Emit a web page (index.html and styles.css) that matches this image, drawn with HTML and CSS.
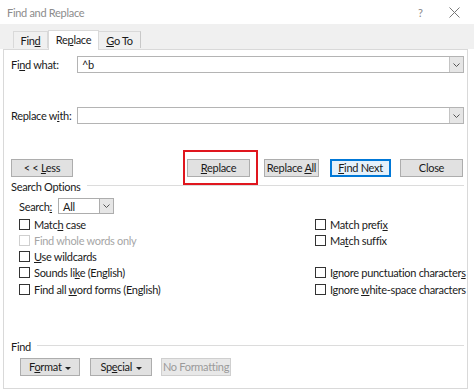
FILE: index.html
```html
<!DOCTYPE html>
<html>
<head>
<meta charset="utf-8">
<link rel="stylesheet" href="styles.css">
</head>
<body>
<div class="window">
  <div class="titlebar">
    <span class="title">Find and Replace</span>
    <span class="help">?</span>
    <span class="close-x">
      <svg width="11" height="11" viewBox="0 0 11 11"><path d="M0.5 0.5 L10.5 10.5 M10.5 0.5 L0.5 10.5" stroke="#777" stroke-width="1" fill="none"/></svg>
    </span>
  </div>
  <div class="tabstrip">
    <div class="tab tab-find">Fin<u>d</u></div>
    <div class="tab active">Re<u>p</u>lace</div>
    <div class="tab tab-goto"><u>G</u>o To</div>
  </div>
  <div class="panel">
    <div class="field-row first">
      <label class="field-label">Fi<u>n</u>d what:</label>
      <div class="combo">
        <span class="combo-text">^b</span>
        <span class="combo-btn"><svg width="7" height="4" viewBox="0 0 7 4"><path d="M0.5 0.5 L3.5 3.5 L6.5 0.5" stroke="#555" fill="none"/></svg></span>
      </div>
    </div>
    <div class="field-row second">
      <label class="field-label">Replace w<u>i</u>th:</label>
      <div class="combo">
        <span class="combo-text"></span>
        <span class="combo-btn"><svg width="7" height="4" viewBox="0 0 7 4"><path d="M0.5 0.5 L3.5 3.5 L6.5 0.5" stroke="#555" fill="none"/></svg></span>
      </div>
    </div>
    <div class="button-row">
      <button class="btn btn-less">&lt; &lt; <u>L</u>ess</button>
      <div class="highlight-wrap">
        <button class="btn btn-replace"><u>R</u>eplace</button>
        <span class="highlight"></span>
      </div>
      <button class="btn btn-all">Replace <u>A</u>ll</button>
      <button class="btn btn-next"><u>F</u>ind Next</button>
      <button class="btn btn-close">Close</button>
    </div>
    <div class="group-head opts-head"><span>Search Options</span><span class="rule"></span></div>
    <div class="search-row">
      <span class="search-label">Search<u>:</u></span>
      <div class="select">
        <span class="select-text">All</span>
        <span class="select-btn"><svg width="7" height="4" viewBox="0 0 7 4"><path d="M0.5 0.5 L3.5 3.5 L6.5 0.5" stroke="#555" fill="none"/></svg></span>
      </div>
    </div>
    <div class="options">
      <div class="opt"><span class="box"></span><span>Matc<u>h</u> case</span></div>
      <div class="opt"><span class="box"></span><span>Match prefi<u>x</u></span></div>
      <div class="opt disabled"><span class="box"></span><span>Find whole words only</span></div>
      <div class="opt"><span class="box"></span><span>Ma<u>t</u>ch suffix</span></div>
      <div class="opt"><span class="box"></span><span><u>U</u>se wildcards</span></div>
      <div class="opt empty"></div>
      <div class="opt"><span class="box"></span><span>Sounds li<u>k</u>e (English)</span></div>
      <div class="opt"><span class="box"></span><span>Ignore punctuation character<u>s</u></span></div>
      <div class="opt"><span class="box"></span><span>Find all <u>w</u>ord forms (English)</span></div>
      <div class="opt"><span class="box"></span><span>Ignore <u>w</u>hite-space characters</span></div>
    </div>
    <div class="group-head find-head"><span>Find</span><span class="rule"></span></div>
    <div class="format-row">
      <button class="btn btn-format">F<u>o</u>rmat <span class="caret"></span></button>
      <button class="btn btn-special">Sp<u>e</u>cial <span class="caret"></span></button>
      <button class="btn btn-nofmt" disabled>No Formatting</button>
    </div>
  </div>
</div>
</body>
</html>
```

FILE: styles.css
```css
* { box-sizing: border-box; }
html, body { margin: 0; padding: 0; background: #fff; }
body {
  width: 474px;
  height: 392px;
  overflow: hidden;
  font-family: "Lato", "Noto Sans", sans-serif;
  font-size: 11px;
  letter-spacing: -0.3px;
  color: #1a1a1a;
}
u { text-decoration: underline; text-underline-offset: 1px; }

.window { width: 474px; height: 392px; display: flex; flex-direction: column; }

.titlebar {
  height: 24px;
  display: flex;
  align-items: center;
  padding-left: 7px;
  color: #8c8c8c;
  font-size: 11px;
}
.title { flex: 1; }
.help { width: 12px; margin-right: 19px; font-size: 11px; color: #888; }
.close-x { width: 11px; height: 11px; margin-right: 14px; display: flex; }

.tabstrip {
  height: 25px;
  background: #f0f0f0;
  display: flex;
  align-items: flex-end;
  padding-left: 13px;
  position: relative;
  z-index: 1;
}
.tab {
  height: 17px;
  padding: 0;
  border: 1px solid #d9d9d9;
  border-bottom: none;
  background: #f0f0f0;
  margin-bottom: 1px;
  text-align: center;
  line-height: 17px;
  white-space: nowrap;
}
.tab-find { width: 35px; }
.tab.active {
  width: 51px;
  height: 20px;
  background: #fff;
  margin-bottom: -1px;
  line-height: 17px;
}
.tab-goto { width: 42px; border-left: none; border-right-color: #c8c8c8; }

.panel {
  margin: 0 6px 0 3px;
  height: 340px;
  border: 1px solid #d9d9d9;
  background: #fff;
  padding: 0 3px 0 7px;
  display: flex;
  flex-direction: column;
}

.field-row { display: flex; align-items: center; height: 17px; }
.field-row.first { margin-top: 6px; }
.field-row.second { margin-top: 34px; }
.field-label { width: 66px; flex: none; white-space: nowrap; }
.combo {
  flex: 1;
  height: 17px;
  border: 1px solid #b4b4b4;
  display: flex;
  align-items: center;
}
.combo-text { flex: 1; padding-left: 4px; }
.combo-btn {
  width: 14px;
  height: 15px;
  background: #e6e6e6;
  border-left: 1px solid #c4c4c4;
  display: flex;
  align-items: center;
  justify-content: center;
}

.button-row {
  margin-top: 35px;
  display: flex;
  align-items: center;
  height: 18px;
}
.btn {
  font-family: inherit;
  font-size: 11px;
  letter-spacing: -0.3px;
  color: #1a1a1a;
  height: 18px;
  padding: 0;
  background: #e1e1e1;
  border: 1px solid #adadad;
  border-radius: 0;
  display: block;
  text-align: center;
  line-height: 16px;
  white-space: nowrap;
  flex: none;
}
.btn-less { width: 62px; }
.highlight-wrap { position: relative; margin-left: 114px; display: flex; }
.btn-replace { width: 63px; }
.highlight {
  position: absolute;
  left: -4px; right: -8px; top: -9px; bottom: -8px;
  border: 2px solid #e0161e;
  pointer-events: none;
}
.btn-all { width: 55px; margin-left: 14px; }
.btn-next { width: 61px; margin-left: 11px; border-color: #0078d7; box-shadow: inset 0 0 0 1px #0078d7; background: #e5f1fb; }
.btn-close { width: 63px; margin-left: 9px; }

.group-head {
  display: flex;
  align-items: center;
  height: 13px;
  white-space: nowrap;
}
.group-head .rule { flex: 1; height: 1px; background: #dcdcdc; margin-left: 6px; margin-top: -2px; }
.opts-head { margin-top: 3px; }

.search-row {
  display: flex;
  align-items: center;
  margin-top: 5px;
  padding-left: 8px;
  height: 16px;
}
.search-label { width: 39px; }
.select {
  width: 56px;
  height: 16px;
  border: 1px solid #adadad;
  display: flex;
  align-items: center;
  background: #fff;
}
.select-text { flex: 1; padding-left: 4px; }
.select-btn {
  width: 14px;
  height: 14px;
  background: #e6e6e6;
  border-left: 1px solid #adadad;
  display: flex;
  align-items: center;
  justify-content: center;
}

.options {
  margin-top: 2px;
  padding-left: 8px;
  display: grid;
  grid-template-columns: 296px 1fr;
  grid-auto-rows: 16.25px;
}
.opt { display: flex; align-items: center; white-space: nowrap; }
.box {
  width: 11px;
  height: 11px;
  border: 1px solid #333;
  background: #fff;
  margin-right: 4px;
  flex: none;
}
.opt.disabled { color: #a6a6a6; }
.opt.disabled .box { border-color: #cfcfcf; }

.find-head { margin-top: 43px; }
.format-row {
  display: flex;
  margin-top: 5px;
  padding-left: 9px;
}
.btn-format { width: 60px; }
.btn-special { width: 62px; margin-left: 10px; }
.btn-nofmt { width: 70px; margin-left: 9px; color: #9a9a9a; background: #e8e8e8; border-color: #cfcfcf; }
.caret {
  display: inline-block;
  width: 0; height: 0;
  border-left: 3px solid transparent;
  border-right: 3px solid transparent;
  border-top: 3px solid #222;
  margin-left: 1px;
  vertical-align: middle;
}
```
